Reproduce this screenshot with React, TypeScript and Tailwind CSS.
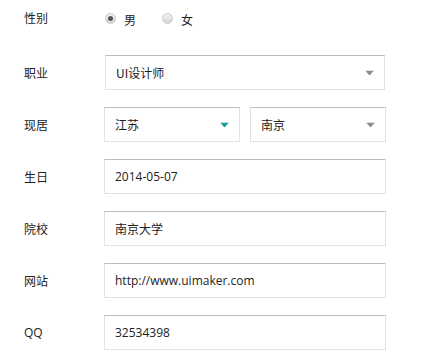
import React from "react";

const CJK = "font-['Noto_Sans_CJK_SC','Noto_Sans_CJK_SC',sans-serif]";
const LATIN = "font-['Open_Sans','Noto_Sans_CJK_SC',sans-serif]";

function Arrow({ color = "#8c8c8c" }: { color?: string }) {
  return (
    <svg width="9" height="5" viewBox="0 0 9 5" className="absolute right-[10px] top-1/2 -translate-y-1/2">
      <path d="M0 0h9L4.5 5z" fill={color} />
    </svg>
  );
}

function Box({ children, className = "" }: { children: React.ReactNode; className?: string }) {
  return (
    <div
      className={`relative h-[35px] flex items-center pl-[10px] bg-white border border-[#e2e2e2] border-t-[#bdbdbd] text-[12px] text-[#222] ${className}`}
    >
      {children}
    </div>
  );
}

function Radio({ checked }: { checked?: boolean }) {
  return (
    <span className="w-[11px] h-[11px] rounded-full border border-[#c8c8c8] bg-gradient-to-b from-[#f2f2f2] to-[#d6d6d6] flex items-center justify-center">
      {checked && <span className="w-[5px] h-[5px] rounded-full bg-[#555]" />}
    </span>
  );
}

function Row({ label, children, className = "" }: { label: string; children: React.ReactNode; className?: string }) {
  return (
    <div className={`flex items-center h-[35px] ${className}`}>
      <div className={`w-[81px] text-[12px] text-[#222] ${label === "QQ" ? LATIN : CJK}`}>{label}</div>
      <div className="flex-1 flex">{children}</div>
    </div>
  );
}

export default function App() {
  return (
    <div className={`w-[431px] h-[363px] bg-white pl-[24px] ${CJK}`}>
      <div className="w-[362px]">
        <Row label="性别">
          <div className="flex items-center text-[12px] text-[#222] pt-[2px]">
            <Radio checked />
            <span className="ml-[8px] mt-[3px]">男</span>
            <span className="ml-[26px]"><Radio /></span>
            <span className="ml-[8px] mt-[3px]">女</span>
          </div>
        </Row>

        <Row label="职业" className="mt-[20px]">
          <Box className="w-[280px]">
            <span className={CJK}>UI设计师</span>
            <Arrow />
          </Box>
        </Row>

        <Row label="现居" className="mt-[17px]">
          <Box className="w-[136px]">
            江苏
            <Arrow color="#1a9d9d" />
          </Box>
          <Box className="w-[136px] ml-[10px]">
            南京
            <Arrow />
          </Box>
        </Row>

        <Row label="生日" className="mt-[17px]">
          <Box className={`w-[282px] ${LATIN} text-[11px]`}>2014-05-07</Box>
        </Row>

        <Row label="院校" className="mt-[17px]">
          <Box className="w-[282px]">南京大学</Box>
        </Row>

        <Row label="网站" className="mt-[17px]">
          <Box className={`w-[282px] ${LATIN} text-[11px]`}>http://www.uimaker.com</Box>
        </Row>

        <Row label="QQ" className="mt-[17px]">
          <Box className={`w-[282px] ${LATIN} text-[11px]`}>32534398</Box>
        </Row>
      </div>
    </div>
  );
}
